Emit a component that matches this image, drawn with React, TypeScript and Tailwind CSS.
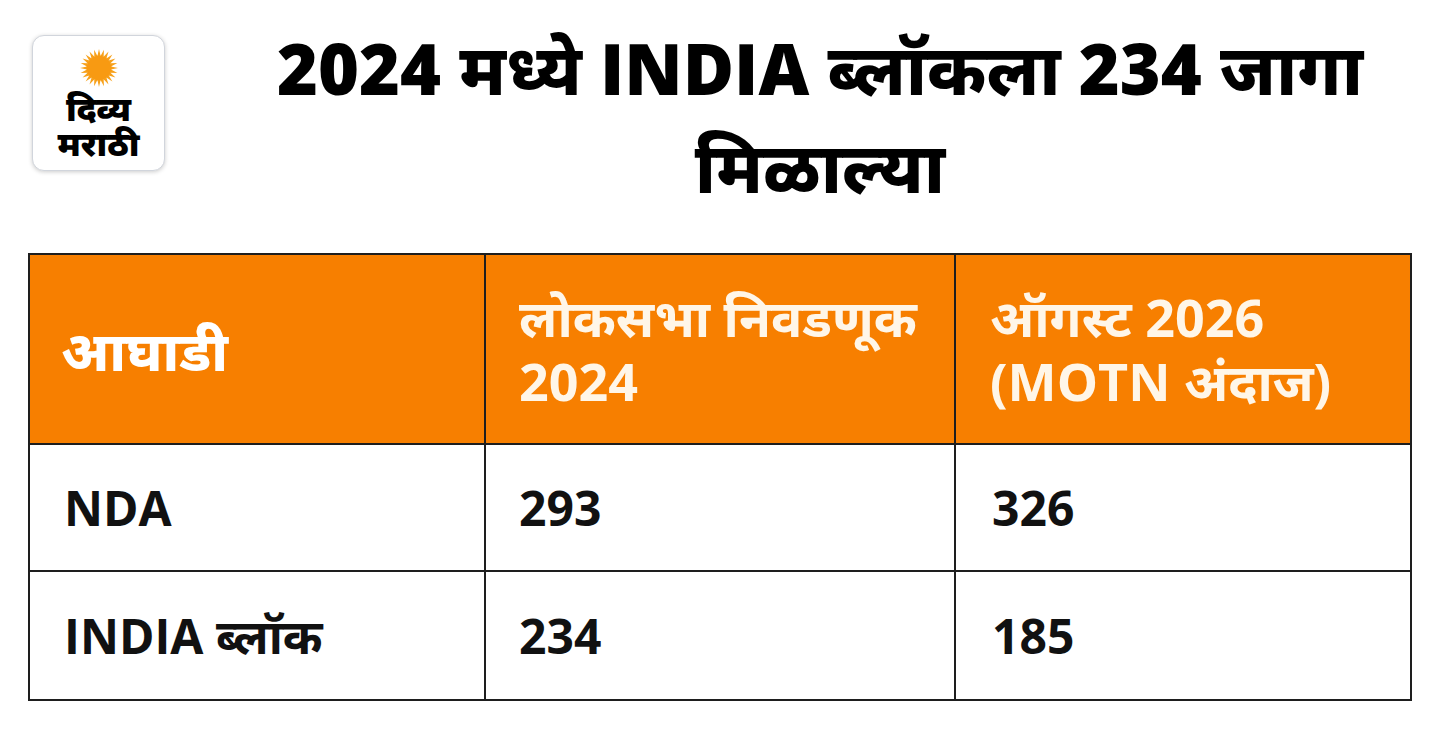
import React from "react";

const rows = [
  { name: "NDA", a: "293", b: "326" },
  { name: "INDIA ब्लॉक", a: "234", b: "185" },
];

const Sun = () => {
  const rays = Array.from({ length: 24 }, (_, i) => i * 15);
  return (
    <svg width="40" height="40" viewBox="-20 -20 40 40">
      {rays.map((deg) => (
        <polygon key={deg} points="-1.6,-12 1.6,-12 0,-19" fill="#f7a11a" transform={`rotate(${deg})`} />
      ))}
      <circle r="12.5" fill="#f89a12" />
    </svg>
  );
};

const Logo = () => (
  <div className="w-[133px] h-[136px] rounded-xl border border-gray-300 bg-white shadow-[0_1px_4px_rgba(0,0,0,0.2)] flex flex-col items-center pt-[12px]">
    <Sun />
    <div className="font-['Noto_Serif','Noto_Sans',serif] font-black text-[34px] leading-[35px] text-black text-center mt-[3px]">
      दिव्य
      <br />
      मराठी
    </div>
  </div>
);

export default function App() {
  return (
    <div className="w-[1440px] h-[736px] bg-white font-['Open_Sans','Noto_Sans',sans-serif] overflow-hidden">
      <div className="flex pt-[35px]">
        <div className="pl-[32px] w-[200px] shrink-0">
          <Logo />
        </div>
        <h1 className="flex-1 text-center font-extrabold text-[70px] leading-[98px] text-black -mt-[16px]">
          2024 मध्ये INDIA ब्लॉकला 234 जागा
          <br />
          मिळाल्या
        </h1>
      </div>

      <div className="ml-[28px] mt-[38px] w-[1384px] border-2 border-[#1e1e1e] grid grid-cols-[456px_470px_1fr]">
        <div className="h-[190px] bg-[#f77f00] border-r-2 border-b-2 border-[#1e1e1e] flex items-center pl-[31px]">
          <span className="text-white font-extrabold text-[55px] leading-none">आघाडी</span>
        </div>
        <div className="h-[190px] bg-[#f77f00] border-r-2 border-b-2 border-[#1e1e1e] flex items-center pl-[33px]">
          <span className="text-[#fff6e8] font-bold text-[52px] leading-[64px]">
            लोकसभा निवडणूक
            <br />
            2024
          </span>
        </div>
        <div className="h-[190px] bg-[#f77f00] border-b-2 border-[#1e1e1e] flex items-center pl-[34px]">
          <span className="text-[#fff6e8] font-bold text-[52px] leading-[64px]">
            ऑगस्ट 2026
            <br />
            (MOTN अंदाज)
          </span>
        </div>

        {rows.map((r, i) => {
          const last = i === rows.length - 1;
          const bb = last ? "" : "border-b-2";
          return (
            <React.Fragment key={r.name}>
              <div className={`h-[127px] border-r-2 ${bb} border-[#1e1e1e] flex items-center pl-[34px]`}>
                <span className="font-bold text-[48px] text-[#111]">{r.name}</span>
              </div>
              <div className={`h-[127px] border-r-2 ${bb} border-[#1e1e1e] flex items-center pl-[33px]`}>
                <span className="font-bold text-[48px] text-[#111]">{r.a}</span>
              </div>
              <div className={`h-[127px] ${bb} border-[#1e1e1e] flex items-center pl-[36px]`}>
                <span className="font-bold text-[48px] text-[#111]">{r.b}</span>
              </div>
            </React.Fragment>
          );
        })}
      </div>
    </div>
  );
}
